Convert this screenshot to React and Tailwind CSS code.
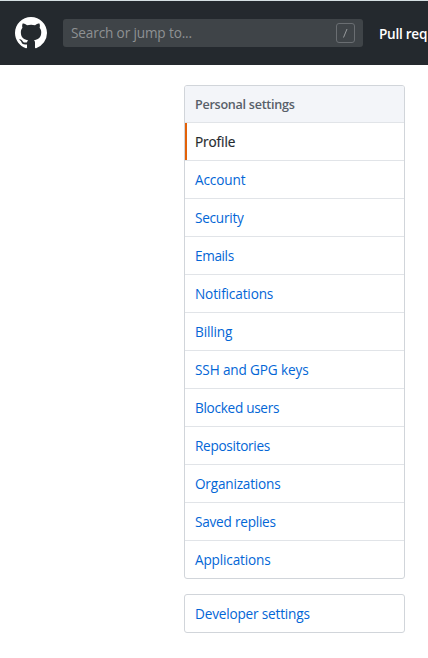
const items = [
  { label: "Account", spacing: "tracking-[-0.14px]" },
  { label: "Security", spacing: "tracking-[-0.25px]" },
  { label: "Emails", spacing: "tracking-[-0.38px]" },
  { label: "Notifications", spacing: "tracking-[-0.14px]" },
  { label: "Billing", spacing: "tracking-[-0.14px]" },
  { label: "SSH and GPG keys", spacing: "tracking-[-0.14px]" },
  { label: "Blocked users", spacing: "tracking-[-0.3px]" },
  { label: "Repositories", spacing: "tracking-[-0.3px]" },
  { label: "Organizations", spacing: "tracking-[-0.2px]" },
  { label: "Saved replies", spacing: "tracking-[-0.23px]" },
  { label: "Applications", spacing: "tracking-[-0.16px]" },
];

function GitHubMark() {
  return (
    <svg viewBox="0 0 16 16" className="size-8 shrink-0 fill-white" aria-hidden="true">
      <path
        fillRule="evenodd"
        d="M8 0C3.58 0 0 3.58 0 8c0 3.54 2.29 6.53 5.47 7.59.4.07.55-.17.55-.38 0-.19-.01-.82-.01-1.49-2.01.37-2.53-.49-2.69-.94-.09-.23-.48-.94-.82-1.13-.28-.15-.68-.52-.01-.53.63-.01 1.08.58 1.23.82.72 1.21 1.87.87 2.33.66.07-.52.28-.87.51-1.07-1.78-.2-3.64-.89-3.64-3.95 0-.87.31-1.59.82-2.15-.08-.2-.36-1.02.08-2.12 0 0 .67-.21 2.2.82.64-.18 1.32-.27 2-.27.68 0 1.36.09 2 .27 1.53-1.04 2.2-.82 2.2-.82.44 1.1.16 1.92.08 2.12.51.56.82 1.27.82 2.15 0 3.07-1.87 3.75-3.65 3.95.29.25.54.73.54 1.48 0 1.07-.01 1.93-.01 2.2 0 .21.15.46.55.38A8.013 8.013 0 0016 8c0-4.42-3.58-8-8-8z"
      />
    </svg>
  );
}

function Header() {
  return (
    <header className="flex h-[65px] items-center overflow-hidden border-t border-[#d5dfe2] bg-[#24292e] pl-[15px]">
      <GitHubMark />
      <div className="ml-4 flex h-7 w-[300px] shrink-0 items-center justify-between rounded-[3px] bg-[#3f4448] pr-2 pl-2">
        <span className="text-[13.6px] leading-5 tracking-[-0.14px] text-[#8e9193]">Search or jump to...</span>
        <svg viewBox="0 0 19 20" className="h-5 w-[19px] fill-none" aria-hidden="true">
          <rect x="0.5" y="0.5" width="18" height="19" rx="2.5" stroke="#6a6e72" />
          <path d="M7.5 14.5 11 6" stroke="#979a9c" />
        </svg>
      </div>
      <span className="ml-4 shrink-0 pt-[2px] text-[13.6px] leading-5 font-semibold tracking-[-0.27px] whitespace-nowrap text-white">
        Pull req
      </span>
    </header>
  );
}

export default function App() {
  return (
    <div className="h-[658px] w-full overflow-hidden bg-white font-['Open_Sans','Noto_Sans',sans-serif]">
      <Header />
      <main className="ml-[184px] w-[221px] pt-5 text-[13.6px] leading-[37px] text-[#0366d6]">
        <nav className="overflow-hidden rounded-[3px] border border-[#d1d5da]">
          <h3 className="h-[37px] border-b border-[#e1e4e8] bg-[#f3f5f9] pl-[10px] text-[12.6px] leading-[37px] font-semibold tracking-[-0.28px] text-[#586069]">
            Personal settings
          </h3>
          <a className="flex h-[38px] border-b border-[#e1e4e8] text-[#24292e]">
            <span className="h-[37px] w-[2px] bg-[#e36209]" />
            <span className="pl-2 tracking-[-0.1px] [-webkit-text-stroke:0.2px_#24292e]">Profile</span>
          </a>
          {items.map(({ label, spacing }) => (
            <a key={label} className="block h-[38px] border-b border-[#e1e4e8] pl-[10px] last:h-[37px] last:border-b-0">
              <span className={spacing}>{label}</span>
            </a>
          ))}
        </nav>
        <nav className="mt-[15px] h-[39px] rounded-[3px] border border-[#d1d5da] pl-[10px]">
          <a className="tracking-[-0.18px]">Developer settings</a>
        </nav>
      </main>
    </div>
  );
}
